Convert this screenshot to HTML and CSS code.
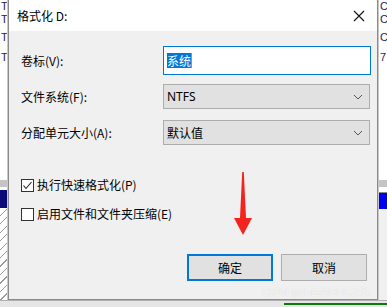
FILE: index.html
```html
<!DOCTYPE html>
<html lang="zh-CN">
<head>
  <meta charset="utf-8">
  <title>格式化 D:</title>
  <link rel="stylesheet" href="styles.css">
</head>
<body>
<div class="screen">
  <div class="side side-left">
    <div class="side-text">
      <span class="t1">T</span>
      <span class="t2">T</span>
      <span class="t3">T</span>
      <span class="t4">T</span>
    </div>
    <div class="band-gray"></div>
    <div class="band-navy"></div>
    <div class="hatch"></div>
  </div>

  <div class="dialog">
    <div class="titlebar">
      <span class="title">格式化 D:</span>
      <svg class="close" width="12" height="12" viewBox="0 0 12 12">
        <path d="M1 1L11 11M11 1L1 11" stroke="#111" stroke-width="1.1" fill="none"/>
      </svg>
    </div>

    <div class="body">
      <div class="row row-first">
        <span class="label">卷标(V):</span>
        <div class="input"><span class="sel">系统</span><span class="caret"></span></div>
      </div>
      <div class="row row-second">
        <span class="label">文件系统(F):</span>
        <div class="select"><span>NTFS</span>
          <svg class="chev" width="10" height="6" viewBox="0 0 10 6"><path d="M1 1L5 5L9 1" stroke="#555" fill="none"/></svg>
        </div>
      </div>
      <div class="row row-third">
        <span class="label">分配单元大小(A):</span>
        <div class="select"><span>默认值</span>
          <svg class="chev" width="10" height="6" viewBox="0 0 10 6"><path d="M1 1L5 5L9 1" stroke="#555" fill="none"/></svg>
        </div>
      </div>

      <label class="check check-first">
        <span class="box">
          <svg width="11" height="11" viewBox="0 0 11 11"><path d="M1.5 5.5L4 8.5L9.5 2" stroke="#222" stroke-width="1.1" fill="none"/></svg>
        </span>
        执行快速格式化(P)
      </label>
      <label class="check check-second">
        <span class="box"></span>
        启用文件和文件夹压缩(E)
      </label>

      <div class="buttons">
        <button class="btn btn-default">确定</button>
        <button class="btn">取消</button>
      </div>

      <svg class="arrow" width="20" height="64" viewBox="0 0 20 64">
        <path d="M9.2 0L10.8 0L13 46L19 46L10 63L1 46L7 46Z" fill="#f5231e"/>
      </svg>
      <span class="watermark">CSDN @小白的BUG之路</span>
    </div>
  </div>

  <div class="side side-right">
    <div class="side-text">
      <span class="t1">C</span>
      <span class="t2">C</span>
      <span class="t3">C</span>
      <span class="t4">7</span>
    </div>
    <div class="band-gray"></div>
    <div class="band-blue"></div>
    <div class="right-lower"></div>
  </div>
</div>
<div class="bottom"><div class="green"></div></div>
</body>
</html>
```

FILE: styles.css
```css
body {
  margin: 0;
  width: 387px;
  height: 307px;
  overflow: hidden;
  background: #d4d4d4;
  font-family: "Noto Sans CJK SC", "Noto Sans", sans-serif;
  font-size: 12px;
  line-height: 16px;
  color: #000;
}

.screen {
  display: flex;
  height: 300px;
}

/* background windows peeking out on both sides */
.side {
  width: 7px;
  overflow: hidden;
  display: flex;
  flex-direction: column;
  background: #fff;
}
.side-left {
  border-right: 1px solid #c8c8c8;
}
.side-right {
  width: 8px;
  border-left: 1px solid #c8c8c8;
}
.side-text {
  height: 180px;
  display: flex;
  flex-direction: column;
  font-family: "Liberation Sans", sans-serif;
  font-size: 11px;
  line-height: 12px;
  color: #2a1a5a;
}
.side-left .side-text { padding: 0 0 0 1px; }
.side-right .side-text { padding-left: 1px; }
.side-text .t2 { margin-top: 1px; }
.side-text .t3 { margin-top: 6px; }
.side-text .t4 { margin-top: 8px; }

.band-gray {
  height: 7px;
  background: #c4c4c4;
  margin-bottom: 3px;
}
.band-navy {
  height: 18px;
  background: #0a0a78;
}
.band-blue {
  height: 16px;
  margin-top: 2px;
  background: #0000f0;
  border-top: 1px solid #888;
}
.hatch {
  flex: 1;
  background: repeating-linear-gradient(135deg, #fff 0 5px, #9a9a9a 5px 6px);
}
.right-lower {
  flex: 1;
  background: #f0f0f0;
}

/* the dialog */
.dialog {
  width: 370px;
  border: 1px solid #8a8a8a;
  border-top: none;
  background: #f0f0f0;
  display: flex;
  flex-direction: column;
}
.titlebar {
  height: 31px;
  background: #fff;
  display: flex;
  align-items: center;
  justify-content: space-between;
  padding: 0 12px 0 8px;
}
.close {
  display: block;
}

.body {
  flex: 1;
  position: relative;
  padding: 15px 0 0 12px;
}
.row {
  display: flex;
  align-items: center;
}
.label {
  flex: 0 0 142px;
}
.row-second { margin-top: 9px; }
.row-third { margin-top: 11px; }

.input {
  width: 203px;
  height: 27px;
  border: 1px solid #0078d7;
  background: #fff;
  display: flex;
  align-items: center;
  padding-left: 3px;
}
.sel {
  background: #0078d7;
  color: #fff;
  line-height: 15px;
}
.caret {
  width: 1px;
  height: 15px;
  background: #f08000;
}

.select {
  width: 196px;
  height: 23px;
  border: 1px solid #adadad;
  background: #e1e1e1;
  display: flex;
  align-items: center;
  justify-content: space-between;
  padding: 0 6px 0 3px;
  font-family: "Noto Sans", "Noto Sans CJK SC", sans-serif;
}
.row-third .select {
  font-family: "Noto Sans CJK SC", sans-serif;
}
.chev { display: block; }

.check {
  display: flex;
  align-items: center;
  gap: 3px;
}
.check-first { margin-top: 32px; }
.check-second { margin-top: 13px; }
.box {
  width: 11px;
  height: 11px;
  border: 1px solid #333;
  background: #fff;
  display: flex;
}
.box svg { display: block; }

.buttons {
  display: flex;
  gap: 8px;
  margin: 32px 0 0 166px;
}
.btn {
  width: 86px;
  height: 27px;
  border: 1px solid #adadad;
  background: #e1e1e1;
  font-family: "Noto Sans CJK SC", sans-serif;
  font-size: 12px;
  color: #000;
  padding: 0;
}
.btn-default {
  border: 2px solid #0078d7;
}

/* annotation drawn over the dialog */
.arrow {
  position: absolute;
  left: 224px;
  bottom: 63px;
  width: 20px;
  height: 64px;
}
.watermark {
  position: absolute;
  right: 6px;
  bottom: 1px;
  font-size: 10px;
  line-height: 12px;
  color: rgba(255, 255, 255, 0.8);
  text-shadow: 0 0 1px rgba(0, 0, 0, 0.15);
}

.bottom {
  height: 7px;
  border-top: 1px solid #b0b0b0;
  background: #e6e6e6;
  position: relative;
}
.green {
  position: absolute;
  left: 284px;
  right: 0;
  top: 2px;
  height: 2px;
  background: #0a7a0a;
}
```
